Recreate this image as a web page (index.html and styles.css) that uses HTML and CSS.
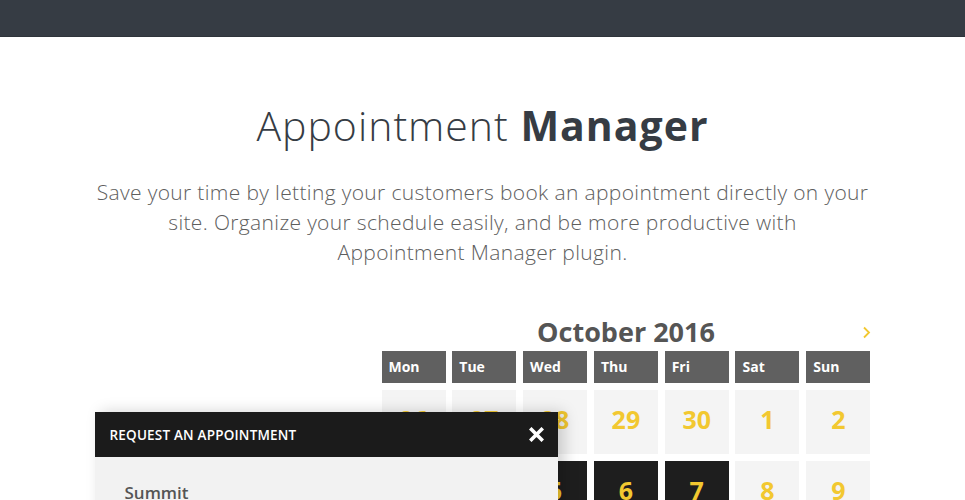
FILE: index.html
```html
<!DOCTYPE html>
<html lang="en">
<head>
    <meta charset="UTF-8"/>
    <title>Appointment Manager</title>
    <link rel="stylesheet" href="styles.css">
</head>
<body>
<div class="topbar"></div>

<section class="intro">
    <h1 class="intro-title">Appointment <strong>Manager</strong></h1>
    <p class="intro-text">Save your time by letting your customers book an appointment directly on your<br>
        site. Organize your schedule easily, and be more productive with<br>
        Appointment Manager plugin.</p>

    <div class="demo">
        <div class="calendar">
            <div class="calendar-head">
                <span class="month">October 2016</span>
                <span class="next">
                    <svg width="9" height="13" viewBox="0 0 9 13"><path d="M2 1.5 L7 6.5 L2 11.5" fill="none" stroke="#f2c830" stroke-width="1.8"/></svg>
                </span>
            </div>
            <div class="calendar-grid">
                <div class="dow">Mon</div>
                <div class="dow">Tue</div>
                <div class="dow">Wed</div>
                <div class="dow">Thu</div>
                <div class="dow">Fri</div>
                <div class="dow">Sat</div>
                <div class="dow">Sun</div>

                <div class="day">26</div>
                <div class="day">27</div>
                <div class="day">28</div>
                <div class="day">29</div>
                <div class="day">30</div>
                <div class="day">1</div>
                <div class="day">2</div>

                <div class="day">3</div>
                <div class="day">4</div>
                <div class="day busy">5</div>
                <div class="day busy">6</div>
                <div class="day busy">7</div>
                <div class="day">8</div>
                <div class="day">9</div>
            </div>
        </div>

        <!-- booking popup sits over the calendar -->
        <div class="request">
            <div class="request-head">
                <span>Request an appointment</span>
                <svg class="close" width="15" height="15" viewBox="0 0 15 15"><path d="M2.5 2.5 L12.5 12.5 M12.5 2.5 L2.5 12.5" stroke="#fff" stroke-width="3.6" stroke-linecap="square"/></svg>
            </div>
            <div class="request-body">
                <div class="field-label">Summit</div>
            </div>
        </div>
    </div>
</section>
</body>
</html>
```

FILE: styles.css
```css
body {
    margin: 0;
    background: #fff;
    font-family: "Open Sans", "Noto Sans", sans-serif;
    overflow: hidden;
}

.topbar {
    height: 36px;
    background: #363c44;
    border-bottom: 1px solid #2f343b;
}

.intro {
    width: 776px;
    margin: 0 auto;
    text-align: center;
}

.intro-title {
    margin: 0;
    padding-top: 60px;
    font-size: 41px;
    line-height: 56px;
    font-weight: 300;
    color: #363c44;
    letter-spacing: 1px;
}

.intro-title strong {
    font-weight: 700;
}

.intro-text {
    margin: 24px 0 0;
    font-size: 21px;
    line-height: 30px;
    font-weight: 300;
    color: #5e5e5e;
    letter-spacing: 0.35px;
    white-space: nowrap;
}

.demo {
    position: relative;
    display: flex;
    justify-content: flex-end;
    margin-top: 46px;
}

.calendar {
    width: 489px;
}

.calendar-head {
    position: relative;
    height: 37px;
    text-align: center;
}

.month {
    font-size: 27px;
    line-height: 37px;
    font-weight: 700;
    color: #555;
}

.next {
    position: absolute;
    right: 0;
    top: 9px;
}

.calendar-grid {
    display: grid;
    grid-template-columns: repeat(7, 64px);
    grid-template-rows: 32px 64px 64px;
    column-gap: 6.8px;
    row-gap: 7px;
    margin-top: 1px;
}

.dow {
    background: #606060;
    color: #fff;
    font-size: 14px;
    font-weight: 700;
    line-height: 32px;
    text-align: left;
    padding-left: 7px;
}

.day {
    background: #f4f4f4;
    color: #f2c830;
    font-size: 25px;
    font-weight: 700;
    line-height: 58px;
    text-align: center;
}

.day.busy {
    background: #1e1e1e;
}

.request {
    position: absolute;
    left: 0;
    top: 99px;
    width: 463px;
    box-shadow: 6px 0 14px rgba(0, 0, 0, 0.18);
}

.request-head {
    display: flex;
    align-items: center;
    justify-content: space-between;
    height: 45px;
    padding: 0 14px 0 15px;
    background: #1b1b1b;
    color: #fff;
    font-size: 13.5px;
    font-weight: 600;
    text-transform: uppercase;
    letter-spacing: 0.2px;
}

.request-head .close {
    display: block;
}

.request-body {
    height: 80px;
    padding: 24px 30px 0;
    background: #f2f2f2;
    text-align: left;
}

.field-label {
    font-size: 17px;
    font-weight: 600;
    color: #555;
}
```
